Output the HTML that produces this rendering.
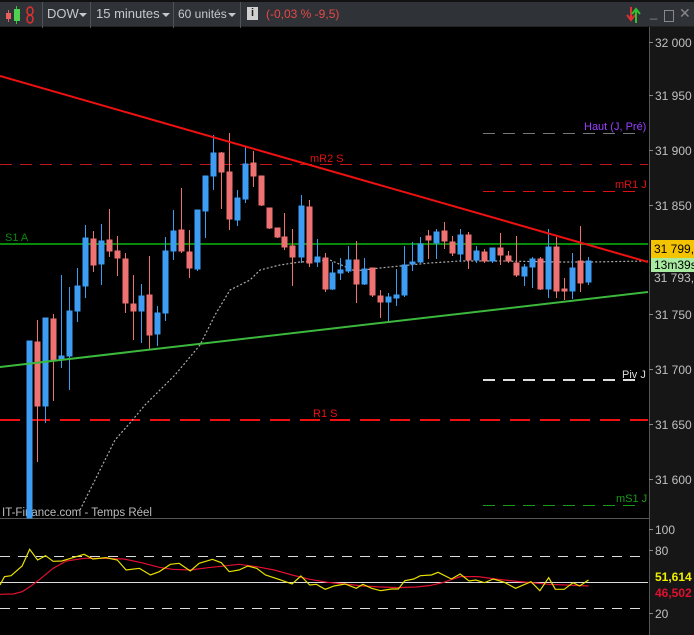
<!DOCTYPE html>
<html><head><meta charset="utf-8"><style>
body{margin:0;width:694px;height:635px;overflow:hidden;background:#000;font-family:"Liberation Sans",sans-serif}
#bar{position:absolute;left:0;top:0;width:694px;height:27px;background:#2f3237;border-top:2px solid #111;box-sizing:border-box;border-bottom:1px solid #222}
.t{position:absolute;top:4px;font-size:13px;color:#c5c9ce;white-space:nowrap}
.sep{position:absolute;top:0;width:1px;height:26px;background:#50545a}
.tri{position:absolute;top:11px;width:0;height:0;border-left:4px solid transparent;border-right:4px solid transparent;border-top:4px solid #c5c9ce}
svg{position:absolute;left:0;top:0}
.ax{font-size:12px;fill:#c0c0c0}
</style></head><body>
<svg width="694" height="635" viewBox="0 0 694 635">
<rect x="649" y="27" width="45" height="608" fill="#161616"/>
<line x1="649.5" y1="27" x2="649.5" y2="635" stroke="#555"/>
<line x1="0" y1="518.5" x2="649" y2="518.5" stroke="#555"/>
<g class="ax">
<text x="655" y="47">32 000</text><text x="655" y="100">31 950</text><text x="655" y="155">31 900</text><text x="655" y="210">31 850</text>
<text x="655" y="319">31 750</text><text x="655" y="374">31 700</text><text x="655" y="429">31 650</text><text x="655" y="484">31 600</text>
<text x="655" y="534">100</text><text x="655" y="555">80</text><text x="655" y="618">20</text>
</g>
<g stroke="#888"><line x1="649" y1="42.5" x2="653" y2="42.5"/><line x1="649" y1="95.5" x2="653" y2="95.5"/><line x1="649" y1="150.5" x2="653" y2="150.5"/><line x1="649" y1="205.5" x2="653" y2="205.5"/><line x1="649" y1="314.5" x2="653" y2="314.5"/><line x1="649" y1="369.5" x2="653" y2="369.5"/><line x1="649" y1="424.5" x2="653" y2="424.5"/><line x1="649" y1="479.5" x2="653" y2="479.5"/><line x1="649" y1="529.5" x2="653" y2="529.5"/><line x1="649" y1="550.5" x2="653" y2="550.5"/><line x1="649" y1="613.5" x2="653" y2="613.5"/></g>
<line x1="0" y1="164.5" x2="648" y2="164.5" stroke="#c01818" stroke-dasharray="12,8"/>
<line x1="483" y1="133.5" x2="640" y2="133.5" stroke="#777" stroke-dasharray="12,8"/>
<line x1="483" y1="191.5" x2="640" y2="191.5" stroke="#e01010" stroke-dasharray="12,8"/>
<line x1="483" y1="380" x2="640" y2="380" stroke="#ddd" stroke-width="2" stroke-dasharray="12,8"/>
<line x1="483" y1="505.5" x2="640" y2="505.5" stroke="#1a9a1a" stroke-dasharray="12,8"/>
<line x1="0" y1="420" x2="648" y2="420" stroke="#f01010" stroke-width="2" stroke-dasharray="20,10"/>
<line x1="0" y1="244" x2="648" y2="244" stroke="#0a8a0a" stroke-width="2"/>
<g font-size="11">
<text x="310" y="162" fill="#e01010">mR2 S</text>
<text x="584" y="130" fill="#9a40ff">Haut (J, Pré)</text>
<text x="615" y="188" fill="#e01010">mR1 J</text>
<text x="622" y="378" fill="#ddd">Piv J</text>
<text x="616" y="502" fill="#1a9a1a">mS1 J</text>
<text x="313" y="417" fill="#f01010">R1 S</text>
<text x="5" y="241" fill="#0a8a0a">S1 A</text>
<text x="2" y="516" fill="#bbb" font-size="11.5">IT-Finance.com - Temps Réel</text>
</g>
<polyline fill="none" stroke="#aaa" stroke-width="1.2" stroke-dasharray="2,2" points="80,510 100,470 115,440 130,423 145,405 160,390 175,375 200,345 215,315 230,290 250,280 260,270 280,265 300,262 330,260 355,271 380,268 400,266 430,263 460,261 500,261 560,262 590,262 648,261"/>
<g stroke-width="1">
<g stroke="#3d9df2" fill="#3d9df2">
<line x1="29.5" y1="341" x2="29.5" y2="518"/><rect x="27" y="341" width="5" height="177"/>
<line x1="45.5" y1="318" x2="45.5" y2="423"/><rect x="43" y="318" width="5" height="88"/>
<line x1="61.5" y1="275" x2="61.5" y2="368"/><rect x="59" y="356" width="5" height="3"/>
<line x1="69.5" y1="287" x2="69.5" y2="390"/><rect x="67" y="311" width="5" height="45"/>
<line x1="77.5" y1="268" x2="77.5" y2="322"/><rect x="75" y="286" width="5" height="25"/>
<line x1="85.5" y1="225" x2="85.5" y2="298"/><rect x="83" y="238" width="5" height="48"/>
<line x1="101.5" y1="224" x2="101.5" y2="285"/><rect x="99" y="241" width="5" height="23"/>
<line x1="141.5" y1="284" x2="141.5" y2="343"/><rect x="139" y="296" width="5" height="15"/>
<line x1="157.5" y1="306" x2="157.5" y2="346"/><rect x="155" y="313" width="5" height="21"/>
<line x1="165.5" y1="237" x2="165.5" y2="321"/><rect x="163" y="251" width="5" height="62"/>
<line x1="173.5" y1="210" x2="173.5" y2="260"/><rect x="171" y="231" width="5" height="20"/>
<line x1="197.5" y1="210" x2="197.5" y2="271"/><rect x="195" y="210" width="5" height="59"/>
<line x1="205.5" y1="176" x2="205.5" y2="238"/><rect x="203" y="176" width="5" height="35"/>
<line x1="213.5" y1="135" x2="213.5" y2="190"/><rect x="211" y="153" width="5" height="23"/>
<line x1="237.5" y1="190" x2="237.5" y2="226"/><rect x="235" y="198" width="5" height="22"/>
<line x1="245.5" y1="147" x2="245.5" y2="203"/><rect x="243" y="164" width="5" height="35"/>
<line x1="301.5" y1="195" x2="301.5" y2="263"/><rect x="299" y="206" width="5" height="51"/>
<line x1="317.5" y1="239" x2="317.5" y2="267"/><rect x="315" y="257" width="5" height="5"/>
<line x1="332.5" y1="262" x2="332.5" y2="290"/><rect x="330" y="273" width="5" height="16"/>
<line x1="340.5" y1="258" x2="340.5" y2="280"/><rect x="338" y="270" width="5" height="3"/>
<line x1="348.5" y1="246" x2="348.5" y2="273"/><rect x="346" y="260" width="5" height="11"/>
<line x1="364.5" y1="258" x2="364.5" y2="285"/><rect x="362" y="269" width="5" height="15"/>
<line x1="388.5" y1="293" x2="388.5" y2="321"/><rect x="386" y="297" width="5" height="5"/>
<line x1="396.5" y1="269" x2="396.5" y2="306"/><rect x="394" y="295" width="5" height="3"/>
<line x1="404.5" y1="246" x2="404.5" y2="297"/><rect x="402" y="265" width="5" height="30"/>
<line x1="412.5" y1="242" x2="412.5" y2="271"/><rect x="410" y="262" width="5" height="2"/>
<line x1="420.5" y1="237" x2="420.5" y2="263"/><rect x="418" y="244" width="5" height="18"/>
<line x1="436.5" y1="229" x2="436.5" y2="259"/><rect x="434" y="232" width="5" height="11"/>
<line x1="460.5" y1="229" x2="460.5" y2="262"/><rect x="458" y="235" width="5" height="19"/>
<line x1="476.5" y1="246" x2="476.5" y2="263"/><rect x="474" y="251" width="5" height="9"/>
<line x1="492.5" y1="248" x2="492.5" y2="263"/><rect x="490" y="248" width="5" height="13"/>
<line x1="524.5" y1="264" x2="524.5" y2="286"/><rect x="522" y="267" width="5" height="9"/>
<line x1="532.5" y1="257" x2="532.5" y2="288"/><rect x="530" y="259" width="5" height="8"/>
<line x1="548.5" y1="229" x2="548.5" y2="298"/><rect x="546" y="247" width="5" height="42"/>
<line x1="572.5" y1="253" x2="572.5" y2="299"/><rect x="570" y="268" width="5" height="23"/>
<line x1="588.5" y1="257" x2="588.5" y2="285"/><rect x="586" y="261" width="5" height="21"/>
</g>
<g stroke="#ee7272" fill="#ee7272">
<line x1="37.5" y1="320" x2="37.5" y2="462"/><rect x="35" y="342" width="5" height="64"/>
<line x1="53.5" y1="314" x2="53.5" y2="401"/><rect x="51" y="319" width="5" height="41"/>
<line x1="93.5" y1="231" x2="93.5" y2="272"/><rect x="91" y="239" width="5" height="26"/>
<line x1="109.5" y1="209" x2="109.5" y2="257"/><rect x="107" y="240" width="5" height="11"/>
<line x1="117.5" y1="236" x2="117.5" y2="276"/><rect x="115" y="251" width="5" height="7"/>
<line x1="125.5" y1="253" x2="125.5" y2="313"/><rect x="123" y="259" width="5" height="44"/>
<line x1="133.5" y1="275" x2="133.5" y2="340"/><rect x="131" y="304" width="5" height="7"/>
<line x1="149.5" y1="256" x2="149.5" y2="349"/><rect x="147" y="295" width="5" height="40"/>
<line x1="181.5" y1="188" x2="181.5" y2="253"/><rect x="179" y="230" width="5" height="21"/>
<line x1="189.5" y1="230" x2="189.5" y2="278"/><rect x="187" y="252" width="5" height="16"/>
<line x1="221.5" y1="152" x2="221.5" y2="209"/><rect x="219" y="153" width="5" height="19"/>
<line x1="229.5" y1="133" x2="229.5" y2="230"/><rect x="227" y="172" width="5" height="47"/>
<line x1="253.5" y1="151" x2="253.5" y2="187"/><rect x="251" y="163" width="5" height="13"/>
<line x1="261.5" y1="176" x2="261.5" y2="206"/><rect x="259" y="176" width="5" height="29"/>
<line x1="269.5" y1="208" x2="269.5" y2="229"/><rect x="267" y="208" width="5" height="20"/>
<line x1="277.5" y1="228" x2="277.5" y2="238"/><rect x="275" y="228" width="5" height="9"/>
<line x1="284.5" y1="213" x2="284.5" y2="250"/><rect x="282" y="237" width="5" height="10"/>
<line x1="292.5" y1="229" x2="292.5" y2="286"/><rect x="290" y="246" width="5" height="11"/>
<line x1="309.5" y1="200" x2="309.5" y2="267"/><rect x="307" y="207" width="5" height="56"/>
<line x1="325.5" y1="253" x2="325.5" y2="292"/><rect x="323" y="258" width="5" height="31"/>
<line x1="356.5" y1="241" x2="356.5" y2="303"/><rect x="354" y="260" width="5" height="24"/>
<line x1="372.5" y1="268" x2="372.5" y2="297"/><rect x="370" y="268" width="5" height="27"/>
<line x1="380.5" y1="290" x2="380.5" y2="318"/><rect x="378" y="296" width="5" height="6"/>
<line x1="428.5" y1="230" x2="428.5" y2="259"/><rect x="426" y="236" width="5" height="4"/>
<line x1="444.5" y1="222" x2="444.5" y2="249"/><rect x="442" y="231" width="5" height="10"/>
<line x1="452.5" y1="236" x2="452.5" y2="256"/><rect x="450" y="242" width="5" height="11"/>
<line x1="468.5" y1="232" x2="468.5" y2="269"/><rect x="466" y="235" width="5" height="25"/>
<line x1="484.5" y1="249" x2="484.5" y2="263"/><rect x="482" y="252" width="5" height="9"/>
<line x1="500.5" y1="233" x2="500.5" y2="265"/><rect x="498" y="248" width="5" height="7"/>
<line x1="508.5" y1="251" x2="508.5" y2="263"/><rect x="506" y="256" width="5" height="5"/>
<line x1="516.5" y1="236" x2="516.5" y2="277"/><rect x="514" y="263" width="5" height="12"/>
<line x1="540.5" y1="257" x2="540.5" y2="290"/><rect x="538" y="259" width="5" height="30"/>
<line x1="556.5" y1="237" x2="556.5" y2="298"/><rect x="554" y="247" width="5" height="44"/>
<line x1="564.5" y1="278" x2="564.5" y2="300"/><rect x="562" y="289" width="5" height="2"/>
<line x1="580.5" y1="226" x2="580.5" y2="292"/><rect x="578" y="261" width="5" height="22"/>
</g>
</g>
<line x1="0" y1="76" x2="648" y2="262" stroke="#ee1111" stroke-width="2"/>
<line x1="0" y1="367" x2="648" y2="292" stroke="#3cb83c" stroke-width="2"/>
<rect x="651" y="240" width="43" height="18" fill="#f5c400"/>
<text x="654" y="253" font-size="12" fill="#000">31 799,0</text>
<rect x="651" y="258" width="43" height="14" fill="#a8eaa0"/>
<text x="654" y="269" font-size="12" fill="#000">13m39s</text>
<text x="654" y="282" font-size="12" fill="#c0c0c0">31 793,8</text>
<line x1="0" y1="556.5" x2="648" y2="556.5" stroke="#ddd" stroke-dasharray="10,8"/>
<line x1="0" y1="608.5" x2="648" y2="608.5" stroke="#ddd" stroke-dasharray="10,8"/>
<line x1="0" y1="582.5" x2="648" y2="582.5" stroke="#ddd"/>
<g transform="translate(0,500) scale(0.4425,0.3333)">
<polyline fill="none" stroke="#e01030" stroke-width="1.2" vector-effect="non-scaling-stroke" points="0,283 30,282 50,275 70,258 90,238 120,205 150,183 190,175 230,175 280,177 320,188 360,202 390,208 430,210 470,203 500,199 540,193 580,200 620,210 660,225 700,238 740,247 780,252 820,258 860,261 900,263 940,261 970,257 1000,248 1040,230 1080,230 1120,237 1160,243 1200,248 1240,253 1280,255 1330,258"/>
<polyline fill="none" stroke="#e8e000" stroke-width="1.2" vector-effect="non-scaling-stroke" points="0,255 10,230 25,227 50,198 67,148 85,180 103,167 120,184 140,183 160,175 190,163 210,177 240,173 265,180 285,210 315,205 340,225 360,215 385,193 405,190 430,213 450,190 480,178 500,188 518,215 540,210 560,198 580,205 600,225 630,238 660,252 680,228 700,255 715,253 735,268 755,258 780,252 805,265 820,253 840,265 860,272 885,267 900,267 915,242 935,237 950,227 975,225 990,217 1020,237 1040,222 1060,243 1075,240 1095,248 1115,237 1140,247 1165,265 1200,245 1220,272 1240,233 1255,268 1275,268 1295,248 1310,258 1330,240"/>
</g>
<text x="655" y="581" font-size="12" font-weight="bold" fill="#f0f000">51,614</text>
<text x="655" y="597" font-size="12" font-weight="bold" fill="#e01030">46,502</text>
</svg>
<div id="bar">
<svg width="20" height="24" style="left:3px;top:2px"><line x1="5.5" y1="6" x2="5.5" y2="18" stroke="#e06060"/><rect x="3" y="9" width="5" height="6" fill="#e86060"/><line x1="13.5" y1="2" x2="13.5" y2="20" stroke="#40c040"/><rect x="11" y="5" width="6" height="12" fill="#50d050"/></svg>
<svg width="12" height="24" style="left:25px;top:2px"><ellipse cx="5" cy="7" rx="3" ry="4" fill="none" stroke="#e03030" stroke-width="1.5"/><ellipse cx="5" cy="15" rx="3" ry="4" fill="none" stroke="#e03030" stroke-width="1.5"/></svg>
<div class="sep" style="left:42px"></div>
<div class="t" style="left:47px">DOW</div><div class="tri" style="left:79px"></div>
<div class="sep" style="left:90px"></div>
<div class="t" style="left:96px">15 minutes</div><div class="tri" style="left:162px"></div>
<div class="sep" style="left:173px"></div>
<div class="t" style="left:178px;font-size:12px;top:5px">60 unités</div><div class="tri" style="left:228px"></div>
<div class="sep" style="left:240px"></div>
<div style="position:absolute;left:247px;top:5px;width:11px;height:13px;background:#d0d0d0;color:#222;font-size:11px;font-weight:bold;text-align:center;line-height:13px">i</div>
<div class="t" style="left:266px;color:#e84848;font-size:12px;top:5px">(-0,03 % -9,5)</div>
<svg width="20" height="24" style="left:624px;top:1px"><path d="M7 4 L7 16 M3 12 L7 17 L11 12" fill="none" stroke="#e03030" stroke-width="2"/><path d="M12 20 L12 8 M8 11 L12 6 L16 11" fill="none" stroke="#30c030" stroke-width="2"/></svg>
<div class="t" style="left:650px;color:#888;top:3px">_</div>
<div style="position:absolute;left:664px;top:8px;width:8px;height:10px;border:1px solid #888"></div>
<div class="t" style="left:679px;color:#888;font-size:14px;top:3px">✕</div>
</div>
</body></html>
